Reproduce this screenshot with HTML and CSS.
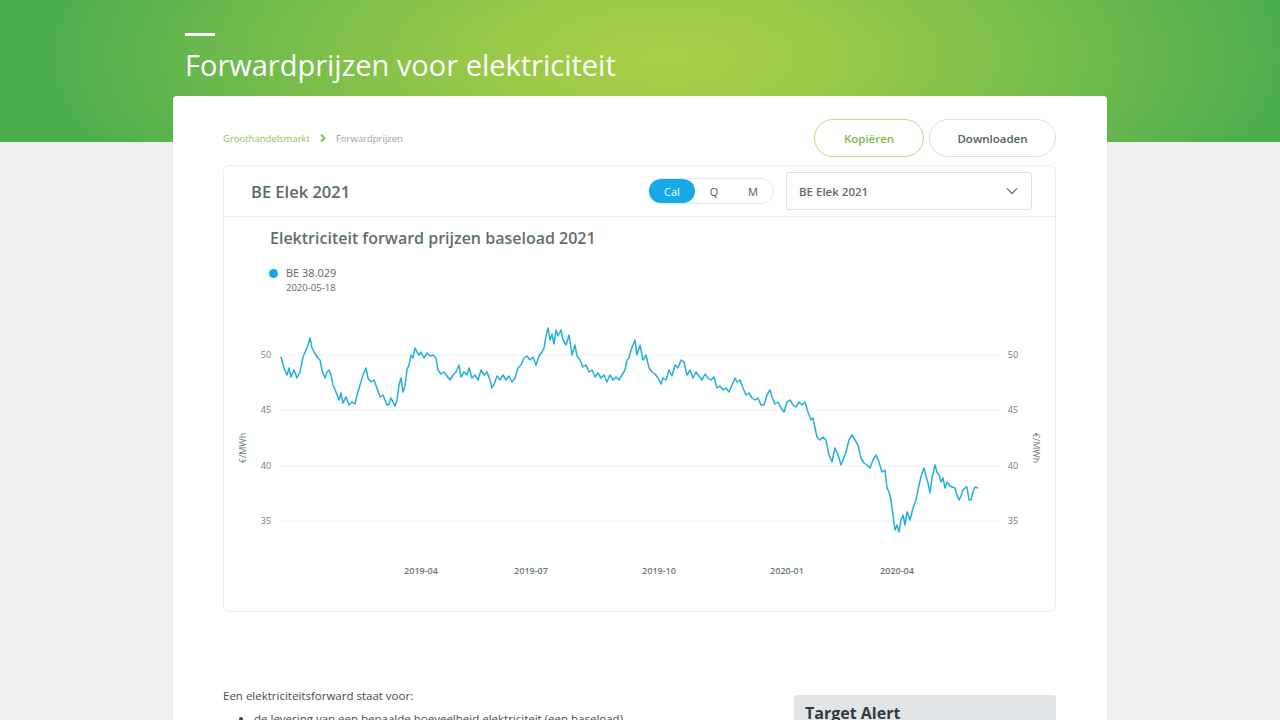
FILE: index.html
```html
<!DOCTYPE html>
<html lang="nl">
<head>
<meta charset="utf-8">
<title>Forwardprijzen voor elektriciteit</title>
<link rel="stylesheet" href="styles.css">
</head>
<body>
<header class="hero">
  <div class="hero-inner">
    <span class="hero-bar"></span>
    <h1 class="hero-title">Forwardprijzen voor elektriciteit</h1>
  </div>
</header>
<main class="sheet">
  <div class="toolbar">
    <nav class="crumbs">
      <a class="crumb-link">Groothandelsmarkt</a>
      <svg class="crumb-sep" width="8" height="10" viewBox="0 0 8 10"><path d="M2 1.5 L5.5 5 L2 8.5" fill="none" stroke="#8cc152" stroke-width="2"/></svg>
      <span class="crumb-current">Forwardprijzen</span>
    </nav>
    <div class="actions">
      <button class="btn btn-green">Kopiëren</button>
      <button class="btn btn-grey">Downloaden</button>
    </div>
  </div>

  <section class="card">
    <div class="card-head">
      <h2 class="card-title">BE Elek 2021</h2>
      <div class="seg">
        <span class="seg-opt seg-cal active">Cal</span>
        <span class="seg-opt seg-q">Q</span>
        <span class="seg-opt seg-m">M</span>
      </div>
      <div class="select">
        <span>BE Elek 2021</span>
        <svg width="12" height="8" viewBox="0 0 12 8"><path d="M1 1.5 L6 6.5 L11 1.5" fill="none" stroke="#6b7878" stroke-width="1.3"/></svg>
      </div>
    </div>
    <div class="card-body">
      <h3 class="chart-title">Elektriciteit forward prijzen baseload 2021</h3>
      <div class="legend">
        <span class="legend-dot"></span>
        <div>
          <div class="legend-val">BE 38.029</div>
          <div class="legend-date">2020-05-18</div>
        </div>
      </div>
      <svg class="chart" width="831" height="300" viewBox="224 300 831 300">
        <g class="grid" stroke="#f1f3f3" stroke-width="1">
          <line x1="277" y1="355" x2="1000" y2="355"/>
          <line x1="277" y1="410" x2="1000" y2="410"/>
          <line x1="277" y1="466" x2="1000" y2="466"/>
          <line x1="277" y1="521" x2="1000" y2="521"/>
        </g>
        <g class="ylab" font-size="9" fill="#6e7c7c" text-anchor="middle">
          <text x="266" y="358">50</text>
          <text x="266" y="413">45</text>
          <text x="266" y="469">40</text>
          <text x="266" y="524">35</text>
          <text x="1013" y="358">50</text>
          <text x="1013" y="413">45</text>
          <text x="1013" y="469">40</text>
          <text x="1013" y="524">35</text>
          <text transform="translate(246 448) rotate(-90)">€/MWh</text>
          <text transform="translate(1033 448) rotate(90)">€/MWh</text>
        </g>
        <g class="xlab" font-size="9" font-weight="600" fill="#667676" text-anchor="middle">
          <text x="421" y="574">2019-04</text>
          <text x="531" y="574">2019-07</text>
          <text x="659" y="574">2019-10</text>
          <text x="787" y="574">2020-01</text>
          <text x="897" y="574">2020-04</text>
        </g>
        <polyline fill="none" stroke="#22afdc" stroke-width="1.5" stroke-linejoin="round" points="281,357 284,368 287,375 289,368 291,377 294,370 297,378 300,372 303,357 306,350 308,345 310,338 312,348 314,352 316,355 318,358 320,360 322,370 325,378 327,372 329,370 331,375 333,385 336,392 339,400 341,393 343,403 346,397 349,405 352,402 355,404 357,395 360,385 363,375 366,368 368,378 371,382 374,380 377,388 380,397 383,395 385,400 387,405 389,404 391,398 393,402 395,406 397,400 399,385 401,378 403,392 405,386 407,370 409,365 411,355 413,358 415,348 417,352 419,355 421,352 424,358 427,353 430,356 433,355 436,358 438,370 441,374 444,372 447,376 450,380 453,375 456,372 459,365 461,377 464,372 467,375 469,368 472,378 475,375 478,380 481,370 484,375 487,372 490,380 492,388 495,382 497,376 500,380 503,375 506,380 509,376 512,382 515,378 518,368 521,365 524,358 527,356 530,360 533,357 536,365 539,356 542,352 544,348 546,336 548,328 550,340 552,334 554,344 556,330 558,336 561,330 563,340 566,345 569,335 572,355 575,345 577,356 580,360 583,367 586,365 589,372 592,370 595,377 598,373 601,378 604,375 607,382 610,375 613,380 616,377 619,380 622,375 625,370 627,360 629,358 631,350 633,345 635,340 637,355 640,345 643,360 646,355 649,368 652,372 655,374 658,378 661,384 663,378 666,380 669,370 672,376 675,365 678,368 681,360 684,362 687,375 690,370 693,378 696,372 699,376 702,380 705,374 708,378 711,380 714,377 717,388 720,386 723,390 726,388 729,392 732,385 735,378 737,382 740,380 743,388 746,395 749,393 752,398 755,400 758,398 761,405 764,405 767,395 770,390 772,397 775,404 778,402 781,408 784,412 787,402 790,400 793,405 796,407 799,402 802,405 805,402 808,412 811,420 813,418 815,428 817,437 820,440 823,437 826,440 829,455 832,462 835,448 838,455 841,465 843,460 846,452 849,440 852,435 855,440 858,445 861,458 864,463 867,465 870,468 873,460 876,455 879,462 882,472 885,470 887,488 889,492 891,500 893,515 895,530 897,525 899,532 901,520 903,515 905,525 907,512 910,520 913,508 916,500 919,485 922,473 924,468 926,476 928,483 930,493 932,478 935,465 937,472 939,475 941,482 943,478 945,488 947,482 950,486 952,487 955,488 957,495 959,500 961,496 963,490 965,488 967,487 969,500 971,500 973,492 975,487 978,488"/>
      </svg>
    </div>
  </section>

  <div class="info">
    <div class="info-text">
      <p class="info-lead">Een elektriciteitsforward staat voor:</p>
      <ul class="info-list">
        <li>de levering van een bepaalde hoeveelheid elektriciteit (een baseload)</li>
      </ul>
    </div>
    <aside class="alert">
      <h4 class="alert-title">Target Alert</h4>
    </aside>
  </div>
</main>
</body>
</html>
```

FILE: styles.css
```css
* { box-sizing: border-box; }
html, body { margin: 0; padding: 0; }
body {
  background: #eff1f0;
  font-family: "Open Sans", "Noto Sans", sans-serif;
  color: #4a5555;
  height: 720px;
  overflow: hidden;
}
.hero {
  height: 142px;
  background: radial-gradient(ellipse 48% 170% at 52% 40%, #a9cf47 0%, #98c948 30%, #6fba4c 70%, #4dae4e 100%);
}
.hero-inner {
  width: 934px;
  margin: 0 auto;
  padding: 33px 0 0 12px;
}
.hero-bar {
  display: block;
  width: 30px;
  height: 3px;
  background: #ffffff;
}
.hero-title {
  margin: 10px 0 0;
  font-size: 29px;
  line-height: 38px;
  font-weight: 500;
  color: #ffffff;
  letter-spacing: 0;
}
.sheet {
  position: relative;
  width: 934px;
  margin: -46px auto 0;
  background: #ffffff;
  border-radius: 4px 4px 0 0;
  padding: 23px 50px 0;
  min-height: 640px;
}
.toolbar {
  display: flex;
  align-items: center;
  justify-content: space-between;
  padding-right: 1px;
}
.crumbs {
  display: flex;
  align-items: center;
  gap: 9px;
  font-size: 9.5px;
}
.crumb-link { color: #8cc152; }
.crumb-current { color: #9aa3a3; }
.actions { display: flex; gap: 5px; }
.btn {
  height: 38px;
  border-radius: 19px;
  background: #fff;
  font-family: inherit;
  font-size: 11.5px;
  font-weight: 600;
  cursor: pointer;
}
.btn-green {
  width: 110px;
  border: 1px solid #b9dc91;
  color: #80bd4a;
}
.btn-grey {
  width: 127px;
  border: 1px solid #dedede;
  color: #4f6161;
}
.card {
  margin-top: 8px;
  width: 833px;
  border: 1px solid #ececec;
  border-radius: 7px;
}
.card-head {
  display: flex;
  align-items: center;
  height: 51px;
  padding: 0 23px 0 27px;
  border-bottom: 1px solid #ececec;
}
.card-title {
  margin: 0;
  flex: 1;
  font-size: 16.5px;
  font-weight: 600;
  color: #5b6b6b;
}
.seg {
  display: flex;
  height: 26px;
  border: 1px solid #e8e8e8;
  border-radius: 13px;
  font-size: 11px;
  color: #4f5c5c;
}
.seg-opt {
  display: flex;
  align-items: center;
  justify-content: center;
  border-radius: 13px;
}
.seg-cal { width: 46px; }
.seg-q { width: 38px; }
.seg-m { width: 40px; }
.seg-opt.active { background: #15a9e7; color: #fff; }
.select {
  margin-left: 12px;
  width: 246px;
  height: 38px;
  display: flex;
  align-items: center;
  justify-content: space-between;
  padding: 0 13px 0 12px;
  border: 1px solid #dfdfdf;
  border-radius: 3px;
  font-size: 11.5px;
  font-weight: 600;
  color: #5b6b6b;
}
.card-body { padding: 10px 0 11px; }
.chart-title {
  margin: 0 0 0 46px;
  font-size: 16px;
  line-height: 22px;
  font-weight: 600;
  color: #5f6f6f;
}
.legend {
  display: flex;
  align-items: flex-start;
  margin: 16px 0 0 45px;
  gap: 8px;
}
.legend-dot {
  width: 9px;
  height: 9px;
  margin-top: 4px;
  border-radius: 50%;
  background: #15a9e7;
}
.legend-val { font-size: 11px; line-height: 15px; color: #5a6666; }
.legend-date { font-size: 9.5px; line-height: 15px; color: #5a6666; }
.chart { display: block; margin-top: 5px; font-family: "Open Sans", sans-serif; }
.info {
  display: flex;
  justify-content: space-between;
  width: 833px;
  margin-top: 76px;
}
.info-text { font-size: 11.5px; color: #444c4c; }
.info-lead { margin: 0; line-height: 16px; }
.info-list { margin: 7px 0 0; padding-left: 31px; line-height: 16px; }
.alert {
  margin-top: 7px;
  width: 262px;
  height: 40px;
  background: #e2e5e7;
  border-radius: 3px;
  padding: 7px 11px;
}
.alert-title {
  margin: 0;
  font-size: 16px;
  font-weight: 700;
  color: #323b40;
}
```
